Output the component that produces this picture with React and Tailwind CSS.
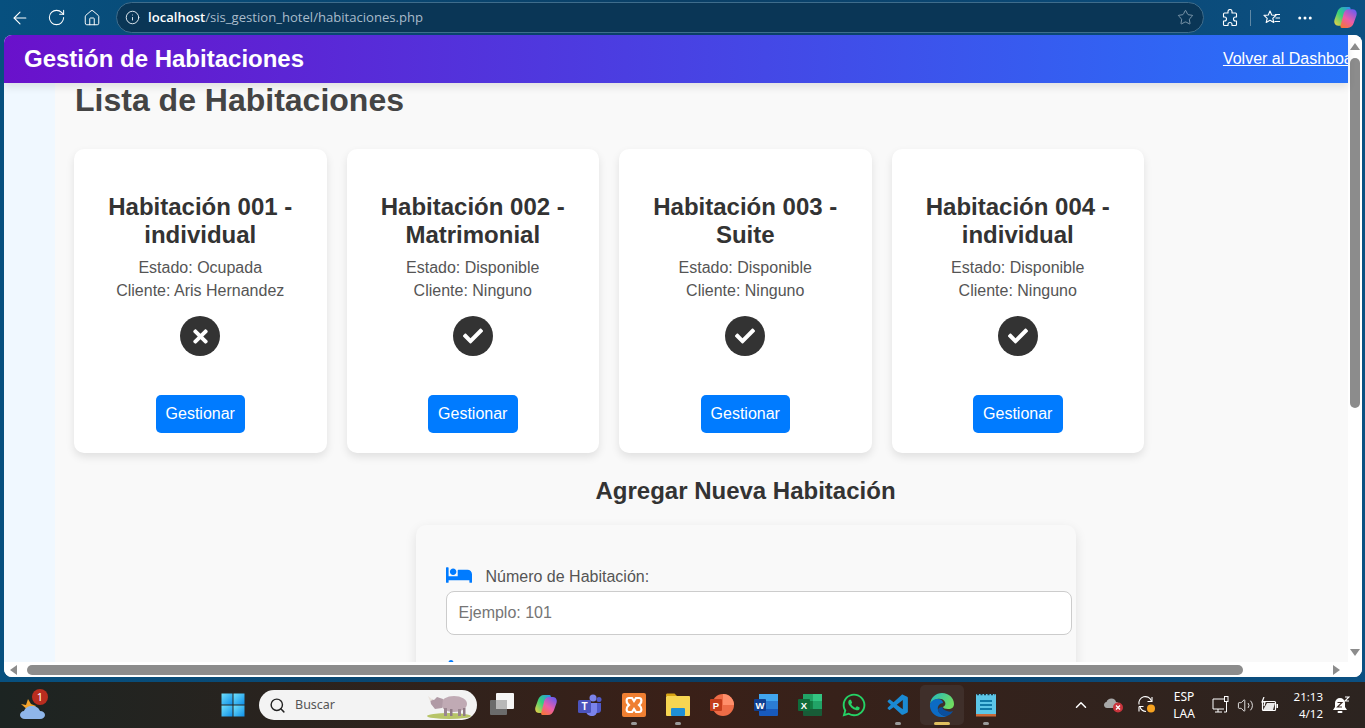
import { ArrowLeft, RotateCw, Home, Info, Star, MoreHorizontal, Search, ChevronUp, Volume2 } from 'lucide-react';
import { FaBed, FaCheck, FaTimes, FaWhatsapp, FaInfo } from 'react-icons/fa';
import { VscVscode } from 'react-icons/vsc';

const rooms = [
  { num: '001', tipo: 'individual', estado: 'Ocupada', cliente: 'Aris Hernandez', ocupada: true },
  { num: '002', tipo: 'Matrimonial', estado: 'Disponible', cliente: 'Ninguno' },
  { num: '003', tipo: 'Suite', estado: 'Disponible', cliente: 'Ninguno' },
  { num: '004', tipo: 'individual', estado: 'Disponible', cliente: 'Ninguno' },
];

function CopilotLogo({ size = 24 }) {
  return (
    <svg width={size} height={size} viewBox="0 0 24 24">
      <defs>
        <linearGradient id="cpA" x1="1" y1="0" x2="0" y2="1">
          <stop offset="0" stopColor="#2a8ff0" />
          <stop offset="0.5" stopColor="#35d07a" />
          <stop offset="1" stopColor="#f8d040" />
        </linearGradient>
        <linearGradient id="cpB" x1="0.8" y1="0" x2="0.2" y2="1">
          <stop offset="0" stopColor="#6a5cf0" />
          <stop offset="0.55" stopColor="#ec5ca8" />
          <stop offset="1" stopColor="#f5743c" />
        </linearGradient>
      </defs>
      <path d="M10 2h5.500c1 0 1.600 1 1.300 2L14 15c-.6 2.500-2 5-5 5H5c-3 0-4.500-3-3.500-6L4 7c1-3 3-5 6-5z" fill="url(#cpA)" />
      <path d="M14 22H8.500c-1 0-1.600-1-1.300-2L10 9c.6-2.500 2-5 5-5h4c3 0 4.500 3 3.500 6L20 17c-1 3-3 5-6 5z" fill="url(#cpB)" />
    </svg>
  );
}

function WindowsLogo() {
  return (
    <svg width="24" height="24" viewBox="0 0 24 24">
      <defs>
        <linearGradient id="winA" x1="0" y1="0" x2="1" y2="1">
          <stop offset="0" stopColor="#6fe0fb" />
          <stop offset="1" stopColor="#0f8fe8" />
        </linearGradient>
      </defs>
      <rect x="0.5" y="0.5" width="11" height="11" fill="url(#winA)" />
      <rect x="12.5" y="0.5" width="11" height="11" fill="url(#winA)" />
      <rect x="0.5" y="12.5" width="11" height="11" fill="url(#winA)" />
      <rect x="12.5" y="12.5" width="11" height="11" fill="url(#winA)" />
    </svg>
  );
}

function Rhino() {
  return (
    <svg width="50" height="30" viewBox="0 0 50 30">
      <ellipse cx="24" cy="26" rx="22" ry="3" fill="#b7c468" />
      <ellipse cx="29" cy="14" rx="13" ry="8" fill="#c0aab4" />
      <path d="M5 9l4 1 3-3 6 2-1 9-7 1-4-5z" fill="#b09aa5" />
      <path d="M5 11l-2-5 5 4z" fill="#e9e2dc" />
      <rect x="19" y="18" width="3" height="8" fill="#9a8590" />
      <rect x="25" y="19" width="2.500" height="7" fill="#8f7a85" />
      <rect x="33" y="19" width="3" height="7" fill="#9a8590" />
      <rect x="38" y="18" width="2.500" height="8" fill="#8f7a85" />
    </svg>
  );
}

function Weather() {
  return (
    <div className="relative w-[26px] h-[24px]">
      <svg width="26" height="24" viewBox="0 0 26 24" className="absolute left-0 top-0">
        <path d="M1 8l5 1 2-6 3 5 5 2-6 6z" fill="#f2a32c" />
        <path d="M5 23c-3 0-5-2-5-4s2-4 4-4c1-3 4-5 8-5s7 2 8 5c3 0 5 2 5 4s-2 4-5 4z" fill="#8fb6ea" />
      </svg>
      <span className="absolute left-[12px] -top-[7px] w-[16px] h-[16px] rounded-full bg-[#b92d1f] text-white text-[11px] leading-[16px] text-center">1</span>
    </div>
  );
}

function TaskView() {
  return (
    <svg width="24" height="24" viewBox="0 0 24 24">
      <rect x="0" y="7" width="17" height="15" rx="1" fill="#6b6b6b" />
      <rect x="6" y="0" width="18" height="16" rx="1" fill="#f5f5f5" />
      <rect x="6" y="7" width="11" height="9" fill="#b8b8b8" />
    </svg>
  );
}

function Teams() {
  return (
    <svg width="24" height="24" viewBox="0 0 24 24">
      <circle cx="15" cy="5" r="3.500" fill="#7b83eb" />
      <circle cx="21" cy="6.500" r="2.500" fill="#5059c9" />
      <path d="M17 10h6v7c0 2-1.500 3-3 3h-3z" fill="#5059c9" />
      <path d="M8 10h11v8c0 3-2 5-5 5s-6-2-6-5z" fill="#7b83eb" />
      <rect x="0" y="7" width="13" height="13" rx="1.500" fill="#4b53bc" />
      <text x="6.500" y="17" textAnchor="middle" fontSize="10" fontWeight="700" fill="#fff" fontFamily="Liberation Sans">T</text>
    </svg>
  );
}

function Xampp() {
  return (
    <svg width="24" height="24" viewBox="0 0 24 24">
      <rect width="24" height="24" rx="2" fill="#ef7f32" />
      <path d="M7 5h3l2 3 2-3h3c3 0 3 4 1 6l-1 1 1 1c2 2 2 6-1 6h-3l-2-3-2 3H7c-3 0-3-4-1-6l1-1-1-1C4 9 4 5 7 5z" fill="none" stroke="#fff" strokeWidth="2.200" />
    </svg>
  );
}

function Explorer() {
  return (
    <svg width="24" height="24" viewBox="0 0 24 24">
      <path d="M0 2c0-1 .5-1.500 1.500-1.500h7L11 3H0z" fill="#d9a514" />
      <rect x="0" y="3" width="24" height="20" rx="1" fill="#f7d552" />
      <rect x="5" y="15" width="14" height="8" rx="1" fill="#1f8fd6" />
    </svg>
  );
}

function PowerPoint() {
  return (
    <svg width="24" height="24" viewBox="0 0 24 24">
      <circle cx="13" cy="12" r="11" fill="#ed6c47" />
      <path d="M13 1a11 11 0 0 1 11 11H13z" fill="#ff8f6b" />
      <rect x="0" y="6" width="12" height="12" rx="1" fill="#c43e1c" />
      <text x="6" y="15.500" textAnchor="middle" fontSize="9.500" fontWeight="700" fill="#fff" fontFamily="Liberation Sans">P</text>
    </svg>
  );
}

function Word() {
  return (
    <svg width="24" height="24" viewBox="0 0 24 24">
      <rect x="5" y="1" width="19" height="22" rx="1" fill="#185abd" />
      <rect x="5" y="1" width="19" height="7" fill="#41a5ee" />
      <rect x="5" y="8" width="19" height="8" fill="#2b7cd3" />
      <rect x="0" y="6" width="12" height="12" rx="1" fill="#103f91" />
      <text x="6" y="15.500" textAnchor="middle" fontSize="9.500" fontWeight="700" fill="#fff" fontFamily="Liberation Sans">W</text>
    </svg>
  );
}

function Excel() {
  return (
    <svg width="24" height="24" viewBox="0 0 24 24">
      <rect x="5" y="1" width="19" height="22" rx="1" fill="#185c37" />
      <rect x="5" y="1" width="9.500" height="7" fill="#21a366" />
      <rect x="14.500" y="1" width="9.500" height="7" fill="#33c481" />
      <rect x="14.500" y="8" width="9.500" height="8" fill="#21a366" />
      <rect x="5" y="8" width="9.500" height="8" fill="#107c41" />
      <rect x="0" y="6" width="12" height="12" rx="1" fill="#0f6b3a" />
      <text x="6" y="15.500" textAnchor="middle" fontSize="9.500" fontWeight="700" fill="#fff" fontFamily="Liberation Sans">X</text>
    </svg>
  );
}

function Edge() {
  return (
    <svg width="26" height="26" viewBox="0 0 26 26">
      <defs>
        <linearGradient id="edgeA" x1="0" y1="0" x2="1" y2="0.500">
          <stop offset="0" stopColor="#1fb8c4" />
          <stop offset="1" stopColor="#6fdc62" />
        </linearGradient>
      </defs>
      <path d="M1 12C2 5 7 1 13 1c7 0 12 5 12 11 0 3-2 5-6 5-3 0-5-1-5-2 2-1 3-3 2-5-1-3-5-4-8-3-4 1-6 3-7 5z" fill="url(#edgeA)" />
      <path d="M1 12c1-3 4-5 8-5 3 0 5 2 5 4-3 0-6 3-5 7 1 4 5 6 9 6-2 1-4 1-6 1C6 25 0 19 1 12z" fill="#0c6bc4" />
      <path d="M9 18c1 4 5 6 9 6 3-1 5-3 6-5-2 1-4 1-6 0-4-1-5-3-4-4-3 0-5 1-5 3z" fill="#0a4f9e" />
    </svg>
  );
}

function Notepad() {
  return (
    <svg width="24" height="24" viewBox="0 0 24 24">
      <rect x="2" y="1" width="20" height="22" rx="1" fill="#5cc6e8" />
      <rect x="2" y="21" width="20" height="2.500" fill="#c86a3a" />
      <path d="M3 1.500h18" stroke="#1c3a48" strokeWidth="1.500" strokeDasharray="2 1.500" />
      <path d="M6 8h12M6 12h12M6 16h12" stroke="#0f7aa8" strokeWidth="2" />
    </svg>
  );
}

function PuzzleOutline() {
  return (
    <svg width="18" height="18" viewBox="0 0 18 18" fill="none" stroke="#fff" strokeWidth="1.100" strokeLinejoin="round">
      <path d="M7 2.500a2 2 0 0 1 4 0V4h3.500a1 1 0 0 1 1 1v3h-1a2 2 0 0 0 0 4h1v3.500a1 1 0 0 1-1 1H11v-1a2 2 0 0 0-4 0v1H3.500a1 1 0 0 1-1-1V12h1a2 2 0 0 0 0-4h-1V5a1 1 0 0 1 1-1H7z" />
    </svg>
  );
}

function Favorites() {
  return (
    <svg width="18" height="18" viewBox="0 0 18 18" fill="none" stroke="#fff" strokeWidth="1.100" strokeLinejoin="round">
      <path d="M7 2l1.700 4 4.300.4-3.200 2.900 1 4.200L7 11.300l-3.800 2.200 1-4.200L1 6.400 5.300 6z" />
      <path d="M12 5.500h5M12.500 9H17M11.500 12.500H17" />
    </svg>
  );
}

function OneDriveOff() {
  return (
    <svg width="20" height="16" viewBox="0 0 20 16">
      <path d="M3 11c-2 0-3-1.500-3-3s1-3 2.500-3C3 3 5 1.500 7.500 1.500 10 1.500 11.500 3 12 5c2 0 3.500 1.500 3.500 3s-1 3-3 3z" fill="#a8a8a8" />
      <circle cx="14" cy="10.500" r="5" fill="#c9343c" />
      <path d="M12 8.500l4 4M16 8.500l-4 4" stroke="#fff" strokeWidth="1.300" />
    </svg>
  );
}

function SyncPending() {
  return (
    <svg width="20" height="20" viewBox="0 0 20 20" fill="none" stroke="#fff" strokeWidth="1.100">
      <path d="M2 9.500A6.500 6.500 0 0 1 14.500 6" />
      <path d="M15 2v4.500h-4.500" />
      <path d="M2 11.500v5M2 11.500h4.500" />
      <path d="M3 12a6.500 6.500 0 0 0 6 4.500" />
      <circle cx="14" cy="13.500" r="4" fill="#f7a320" stroke="none" />
    </svg>
  );
}

function Network() {
  return (
    <svg width="18" height="18" viewBox="0 0 18 18" fill="none" stroke="#fff" strokeWidth="1">
      <path d="M12 3H1v10h11" />
      <path d="M6 13v3M3 16h7" />
      <rect x="12.500" y="0.500" width="3.500" height="5" />
      <path d="M14.500 5.500V16H12" />
    </svg>
  );
}

function Battery() {
  return (
    <svg width="18" height="16" viewBox="0 0 18 16">
      <rect x="1.500" y="4.500" width="13" height="9" rx="1" fill="none" stroke="#fff" strokeWidth="1.200" />
      <rect x="15.500" y="7" width="1.500" height="4" fill="#fff" />
      <path d="M2 13h10l2-7H6z" fill="#fff" opacity="0.9" />
      <path d="M3 0L1 5h3l-1 4" fill="none" stroke="#fff" strokeWidth="1.200" />
    </svg>
  );
}

function BellZ() {
  return (
    <svg width="17" height="19" viewBox="0 0 17 19">
      <path d="M7 2a5 5 0 0 0-5 5v4l-2 3h14l-2-3V7a5 5 0 0 0-5-5z" fill="#fff" />
      <rect x="4.500" y="15" width="5" height="2" rx="1" fill="#fff" />
      <path d="M4.500 6.500h4.500L4.500 11H9" fill="none" stroke="#3a2a24" strokeWidth="1.100" />
      <path d="M12 1h4l-4 4h4" fill="none" stroke="#fff" strokeWidth="1.100" />
    </svg>
  );
}

function Tray({ children, className = '' }) {
  return <div className={`flex items-center justify-center text-white ${className}`}>{children}</div>;
}

const taskIcons = [
  { el: <TaskView /> },
  { el: <CopilotLogo /> },
  { el: <Teams /> },
  { el: <Xampp />, dot: true },
  { el: <Explorer />, dot: true },
  { el: <PowerPoint /> },
  { el: <Word /> },
  { el: <Excel /> },
  { el: <FaWhatsapp size={26} className="text-[#25d366]" /> },
  { el: <VscVscode size={25} className="text-[#1a8ad4]" />, dot: true },
  { el: <Edge />, active: true },
  { el: <Notepad />, dot: true },
];

function RoomCard({ room }) {
  return (
    <div className="bg-white rounded-[10px] shadow-[0_4px_8px_rgba(0,0,0,0.1)] px-5 pt-11 pb-5 flex flex-col items-center text-center">
      <h3 className="text-[24px] leading-[28px] font-bold text-[#333]">
        Habitación {room.num} - {room.tipo}
      </h3>
      <p className="mt-[7px] text-[16px] leading-[23px] text-[#555]">Estado: {room.estado}</p>
      <p className="text-[16px] leading-[23px] text-[#555]">Cliente: {room.cliente}</p>
      <div className="mt-[14px] w-10 h-10 rounded-full bg-[#333] flex items-center justify-center text-white">
        {room.ocupada ? <FaTimes size={21} /> : <FaCheck size={20} />}
      </div>
      <button className="mt-[39px] h-[38px] w-[89.5px] rounded-[5px] bg-[#007bff] text-white text-[16px]">Gestionar</button>
    </div>
  );
}

export default function App() {
  return (
    <div className="w-[1365px] h-[728px] overflow-hidden flex flex-col bg-gradient-to-r from-[#07507f] via-[#0a3f66] to-[#0b5082] font-['Liberation_Sans',Arial,sans-serif]">
      {/* barra del navegador */}
      <div className="h-[35px] shrink-0 flex items-center text-white">
        <div className="w-[116px] flex items-center pl-[10px] gap-[17px]">
          <ArrowLeft size={20} strokeWidth={1.3} />
          <RotateCw size={19} strokeWidth={1.3} />
          <Home size={18} strokeWidth={1.3} />
        </div>
        <div className="w-[1088px] h-[31px] flex items-center rounded-full border border-[#3f6d8c] bg-[#0a3656] pl-2 pr-[9px]">
          <Info size={15} strokeWidth={1.5} className="text-[#e6eef4]" />
          <span className="ml-2 text-[13.1px] font-['Open_Sans',sans-serif] text-[#a9bccb]">
            <span className="text-white font-semibold">localhost</span>/sis_gestion_hotel/habitaciones.php
          </span>
          <Star size={17} strokeWidth={1} className="ml-auto text-[#a9bccb]" />
        </div>
        <div className="flex-1 flex items-center pl-[17px]">
          <PuzzleOutline />
          <div className="w-px h-4 bg-[#5f88a5] ml-[11px] mr-[12px]" />
          <Favorites />
          <MoreHorizontal size={18} className="ml-[15px]" />
          <div className="ml-[19px]"><CopilotLogo size={25} /></div>
        </div>
      </div>

      {/* ventana */}
      <div className="h-[642px] shrink-0 ml-1 mr-[3px] rounded-[8px] overflow-hidden bg-white flex flex-col">
        <div className="flex-1 min-h-0 flex">
          <div className="flex-1 min-w-0 flex flex-col">
            <header className="relative z-10 h-[48px] shrink-0 overflow-hidden shadow-[0_4px_8px_rgba(0,0,0,0.1)]">
              <div className="w-[1383px] h-full flex items-center justify-between px-5 bg-linear-to-r/srgb from-[#6a11cb] to-[#2575fc]">
                <h1 className="text-[24px] font-bold text-white whitespace-nowrap">Gestión de Habitaciones</h1>
                <a className="text-[16px] text-white underline whitespace-nowrap">Volver al Dashboard</a>
              </div>
            </header>
            <div className="flex-1 min-h-0 flex overflow-hidden">
              <div className="w-[51px] shrink-0 bg-[#f0f8ff]" />
              <main className="flex-1 min-w-0 overflow-hidden bg-[#f9f9f9] pl-5">
                <div className="w-[1341px]">
                  <h2 className="text-[32px] leading-[36px] font-bold text-[#444] -mt-px">Lista de Habitaciones</h2>
                  <div className="mt-[31px] -ml-px grid grid-cols-[repeat(4,252.5px)] gap-5">
                    {rooms.map(r => <RoomCard key={r.num} room={r} />)}
                  </div>
                  <h2 className="mt-6 text-[24px] leading-[28px] font-bold text-[#333] text-center">Agregar Nueva Habitación</h2>
                  <form className="mt-5 mx-auto w-[660px] h-[300px] rounded-[10px] bg-[#f9f9f9] shadow-[0_4px_12px_rgba(0,0,0,0.1)] pl-[30px] pt-[40px]">
                    <label className="flex items-start h-[26px] text-[16px] leading-[24px] text-[#555]">
                      <FaBed size={26} className="text-[#007bff] -mt-[3px]" />
                      <span className="ml-[14px]">Número de Habitación:</span>
                    </label>
                    <input readOnly placeholder="Ejemplo: 101" className="block w-[626px] h-[44px] rounded-[8px] border border-[#ccc] bg-white px-3 text-[16px] placeholder:text-[#757575]" />
                    <FaInfo size={18} className="mt-[25px] -ml-[4px] text-[#007bff]" />
                  </form>
                </div>
              </main>
            </div>
          </div>
          {/* scrollbar vertical */}
          <div className="w-[14px] shrink-0 bg-white flex flex-col items-center pt-[8px] pb-[6px]">
            <div className="w-0 h-0 border-x-[5px] border-x-transparent border-b-[7px] border-b-[#8c8c8c]" />
            <div className="mt-[8px] w-[10px] h-[350px] rounded-full bg-[#8c8c8c]" />
            <div className="mt-auto w-0 h-0 border-x-[5px] border-x-transparent border-t-[7px] border-t-[#8c8c8c]" />
          </div>
        </div>
        {/* scrollbar horizontal */}
        <div className="h-[15px] shrink-0 bg-white flex items-center pl-[6px] pr-[22px]">
          <div className="w-0 h-0 border-y-[5px] border-y-transparent border-r-[7px] border-r-[#8c8c8c]" />
          <div className="ml-[10px] w-[1216px] h-[10px] rounded-full bg-[#8c8c8c]" />
          <div className="ml-auto w-0 h-0 border-y-[5px] border-y-transparent border-l-[7px] border-l-[#8c8c8c]" />
        </div>
      </div>
      <div className="h-[5px] shrink-0" />

      {/* barra de tareas */}
      <div className="flex-1 flex items-center bg-gradient-to-r from-[#1c2422] via-[#3a2018] to-[#2c2420] font-['Noto_Sans',sans-serif]">
        <div className="w-[221px] shrink-0 pl-[20px] pt-[6px]"><Weather /></div>
        <WindowsLogo />
        <div className="ml-[14px] w-[218px] h-[30px] rounded-full bg-[#f3f3f3] flex items-center pl-[10px] pr-[2px] text-[#555]">
          <Search size={17} strokeWidth={2} className="text-[#222]" />
          <span className="ml-[9px] text-[12.5px]">Buscar</span>
          <div className="ml-auto"><Rhino /></div>
        </div>
        <div className="ml-[3px] flex">
          {taskIcons.map((t, i) => (
            <div key={i} className={`relative w-[44px] h-[40px] flex items-center justify-center rounded-[5px] ${t.active ? 'bg-[#3f2f2a]' : ''}`}>
              {t.el}
              {t.dot && <span className="absolute bottom-0 left-1/2 -translate-x-1/2 w-[6px] h-[3px] rounded-full bg-[#9a9a9a]" />}
              {t.active && <span className="absolute bottom-0 left-1/2 -translate-x-1/2 w-[16px] h-[3px] rounded-full bg-[#e0c060]" />}
            </div>
          ))}
        </div>
        <div className="ml-auto flex items-center">
          <Tray className="w-[20px]"><ChevronUp size={18} strokeWidth={2} /></Tray>
          <Tray className="w-[20px] ml-[13px]"><OneDriveOff /></Tray>
          <Tray className="w-[20px] ml-[13px]"><SyncPending /></Tray>
          <div className="w-[30px] ml-[12px] text-center text-white text-[12px] leading-[17px]">
            <div>ESP</div>
            <div>LAA</div>
          </div>
          <Tray className="w-[20px] ml-[12px]"><Network /></Tray>
          <Tray className="w-[20px] ml-[4px]"><Volume2 size={17} strokeWidth={1.2} /></Tray>
          <Tray className="w-[20px] ml-[5px]"><Battery /></Tray>
          <div className="w-[34px] ml-[9px] text-right text-white text-[11.5px] leading-[17px]">
            <div>21:13</div>
            <div>4/12</div>
          </div>
          <Tray className="w-[17px] ml-[10px] mr-[15px]"><BellZ /></Tray>
        </div>
      </div>
    </div>
  );
}
